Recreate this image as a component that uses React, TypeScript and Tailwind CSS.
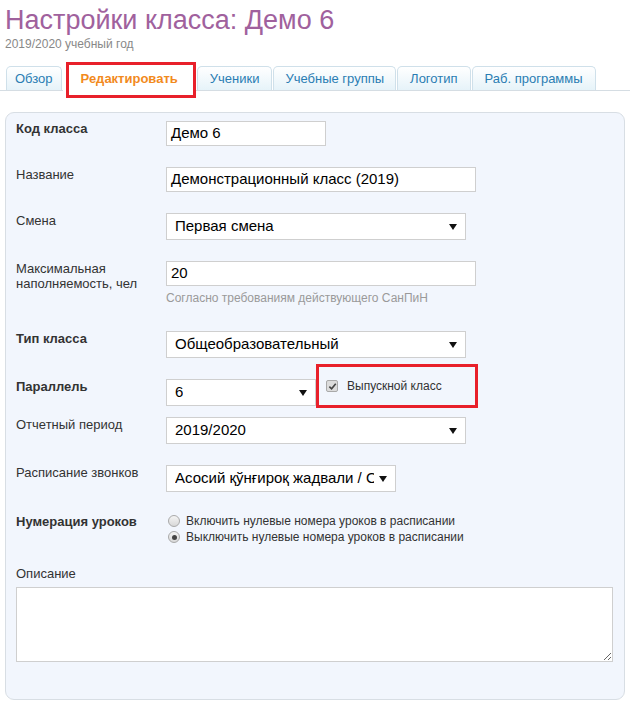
import React from 'react';

const tabs = [
  { id: 'overview', label: 'Обзор', pad: 'px-[8px]' },
  { id: 'edit', label: 'Редактировать', pad: 'px-[17px]', active: true },
  { id: 'students', label: 'Ученики', pad: 'px-[12px]' },
  { id: 'groups', label: 'Учебные группы', pad: 'px-[11px]' },
  { id: 'logo', label: 'Логотип', pad: 'px-[12px]' },
  { id: 'programs', label: 'Раб. программы', pad: 'px-[12px]' },
];

function Arrow() {
  return (
    <svg className="w-[8px] h-[6px] shrink-0" viewBox="0 0 8 6">
      <path d="M0 0H8L4 6Z" fill="#111" />
    </svg>
  );
}

function Select({ value, width }: { value: string; width: string }) {
  return (
    <div className={`${width} h-[27px] flex items-center justify-between bg-white border border-[#cfcfcf] pl-[8px] pr-[8px] text-[15px] text-black overflow-hidden`}>
      <span className="whitespace-nowrap overflow-hidden mr-[5px]">{value}</span>
      <Arrow />
    </div>
  );
}

function Input({ value, width }: { value: string; width: string }) {
  return (
    <div className={`${width} h-[25px] flex items-center bg-white border border-[#cfcfcf] px-[4px] text-[15px] text-black`}>
      {value}
    </div>
  );
}

function Row({
  label,
  bold,
  className,
  children,
}: {
  label: React.ReactNode;
  bold?: boolean;
  className?: string;
  children: React.ReactNode;
}) {
  return (
    <div className={`flex items-start ${className ?? ''}`}>
      <div className={`w-[150px] shrink-0 text-[13px] leading-[15px] text-[#333] ${bold ? 'font-bold' : ''}`}>
        {label}
      </div>
      <div className="flex-1">{children}</div>
    </div>
  );
}

function Radio({ checked }: { checked?: boolean }) {
  return (
    <span className="w-[12px] h-[12px] rounded-full border border-[#a9a9a9] bg-gradient-to-b from-[#f4f4f4] to-[#d8d8d8] flex items-center justify-center shrink-0">
      {checked && <span className="w-[5px] h-[5px] rounded-full bg-[#444]" />}
    </span>
  );
}

export default function App() {
  return (
    <div className="w-[630px] h-[707px] bg-white overflow-hidden font-['Liberation_Sans',Arial,sans-serif]">
      <div className="px-[5px] pt-[4px]">
        <h1 className="text-[27px] leading-[32px] text-[#a0619d]">Настройки класса: Демо 6</h1>
        <div className="text-[12px] leading-[14px] text-[#888] mt-[1px]">2019/2020 учебный год</div>
      </div>

      <div className="mt-[15px] flex items-end pl-[6px] border-b border-[#d5dde3] h-[25px]">
        {tabs.map((tab) => (
          <div
            key={tab.id}
            className={`relative mr-[1px] flex items-center text-[13px] rounded-t-[5px] border border-b-0 ${tab.pad} ${
              tab.active
                ? 'h-[25px] bg-white border-white text-[#f28a1d] font-bold mb-[-1px]'
                : 'h-[24px] bg-gradient-to-b from-white to-[#e6f3f9] border-[#cfe0ea] text-[#2a7db3]'
            }`}
          >
            {tab.label}
            {tab.active && (
              <div className="absolute left-[2px] right-[-1px] top-[-5px] bottom-[-7px] border-[3px] border-[#e8202a]" />
            )}
          </div>
        ))}
      </div>

      <div className="mx-[5px] mt-[21px] h-[588px] rounded-[9px] border border-[#d8dee4] bg-[#f2f6fd] pl-[10px] pr-[12px] pt-[8px]">
        <Row label="Код класса" bold>
          <Input value="Демо 6" width="w-[160px]" />
        </Row>
        <Row label="Название" className="mt-[21px]">
          <Input value="Демонстрационный класс (2019)" width="w-[310px]" />
        </Row>
        <Row label="Смена" className="mt-[21px]">
          <Select value="Первая смена" width="w-[300px]" />
        </Row>
        <Row
          label={
            <>
              Максимальная
              <br />
              наполняемость, чел
            </>
          }
          className="mt-[21px]"
        >
          <Input value="20" width="w-[310px]" />
          <div className="mt-[5px] text-[12px] leading-[14px] text-[#9a9a9a]">Согласно требованиям действующего СанПиН</div>
        </Row>
        <Row label="Тип класса" bold className="mt-[26px]">
          <Select value="Общеобразовательный" width="w-[300px]" />
        </Row>
        <Row label="Параллель" bold className="mt-[21px]">
          <div className="flex items-start">
            <Select value="6" width="w-[150px]" />
            <div className="relative ml-[10px] flex items-center h-[14px]">
              <span className="w-[12px] h-[12px] rounded-[2px] border border-[#a9a9a9] bg-[#dcdcdc] flex items-center justify-center">
                <svg viewBox="0 0 10 10" className="w-[9px] h-[9px]">
                  <path d="M1.5 5.2L4 7.6L8.6 2" fill="none" stroke="#444" strokeWidth="1.8" />
                </svg>
              </span>
              <span className="ml-[9px] text-[12px] text-[#333] whitespace-nowrap">Выпускной класс</span>
              <div className="absolute left-[-10px] top-[-15px] w-[162px] h-[44px] border-[3px] border-[#e8202a]" />
            </div>
          </div>
        </Row>
        <Row label="Отчетный период" className="mt-[11px]">
          <Select value="2019/2020" width="w-[300px]" />
        </Row>
        <Row label="Расписание звонков" className="mt-[21px]">
          <Select value="Асосий қўнғироқ жадвали / Ос" width="w-[230px]" />
        </Row>
        <Row label="Нумерация уроков" bold className="mt-[22px]">
          <div className="flex flex-col gap-[2px] pl-[2px] text-[12px] leading-[14px] text-[#333]">
            <label className="flex items-center gap-[6px]">
              <Radio />
              Включить нулевые номера уроков в расписании
            </label>
            <label className="flex items-center gap-[6px]">
              <Radio checked />
              Выключить нулевые номера уроков в расписании
            </label>
          </div>
        </Row>
        <div className="mt-[22px] text-[13px] leading-[15px] text-[#333]">Описание</div>
        <textarea className="mt-[6px] block w-[597px] h-[75px] bg-white border border-[#cfcfcf]" />
      </div>
    </div>
  );
}
